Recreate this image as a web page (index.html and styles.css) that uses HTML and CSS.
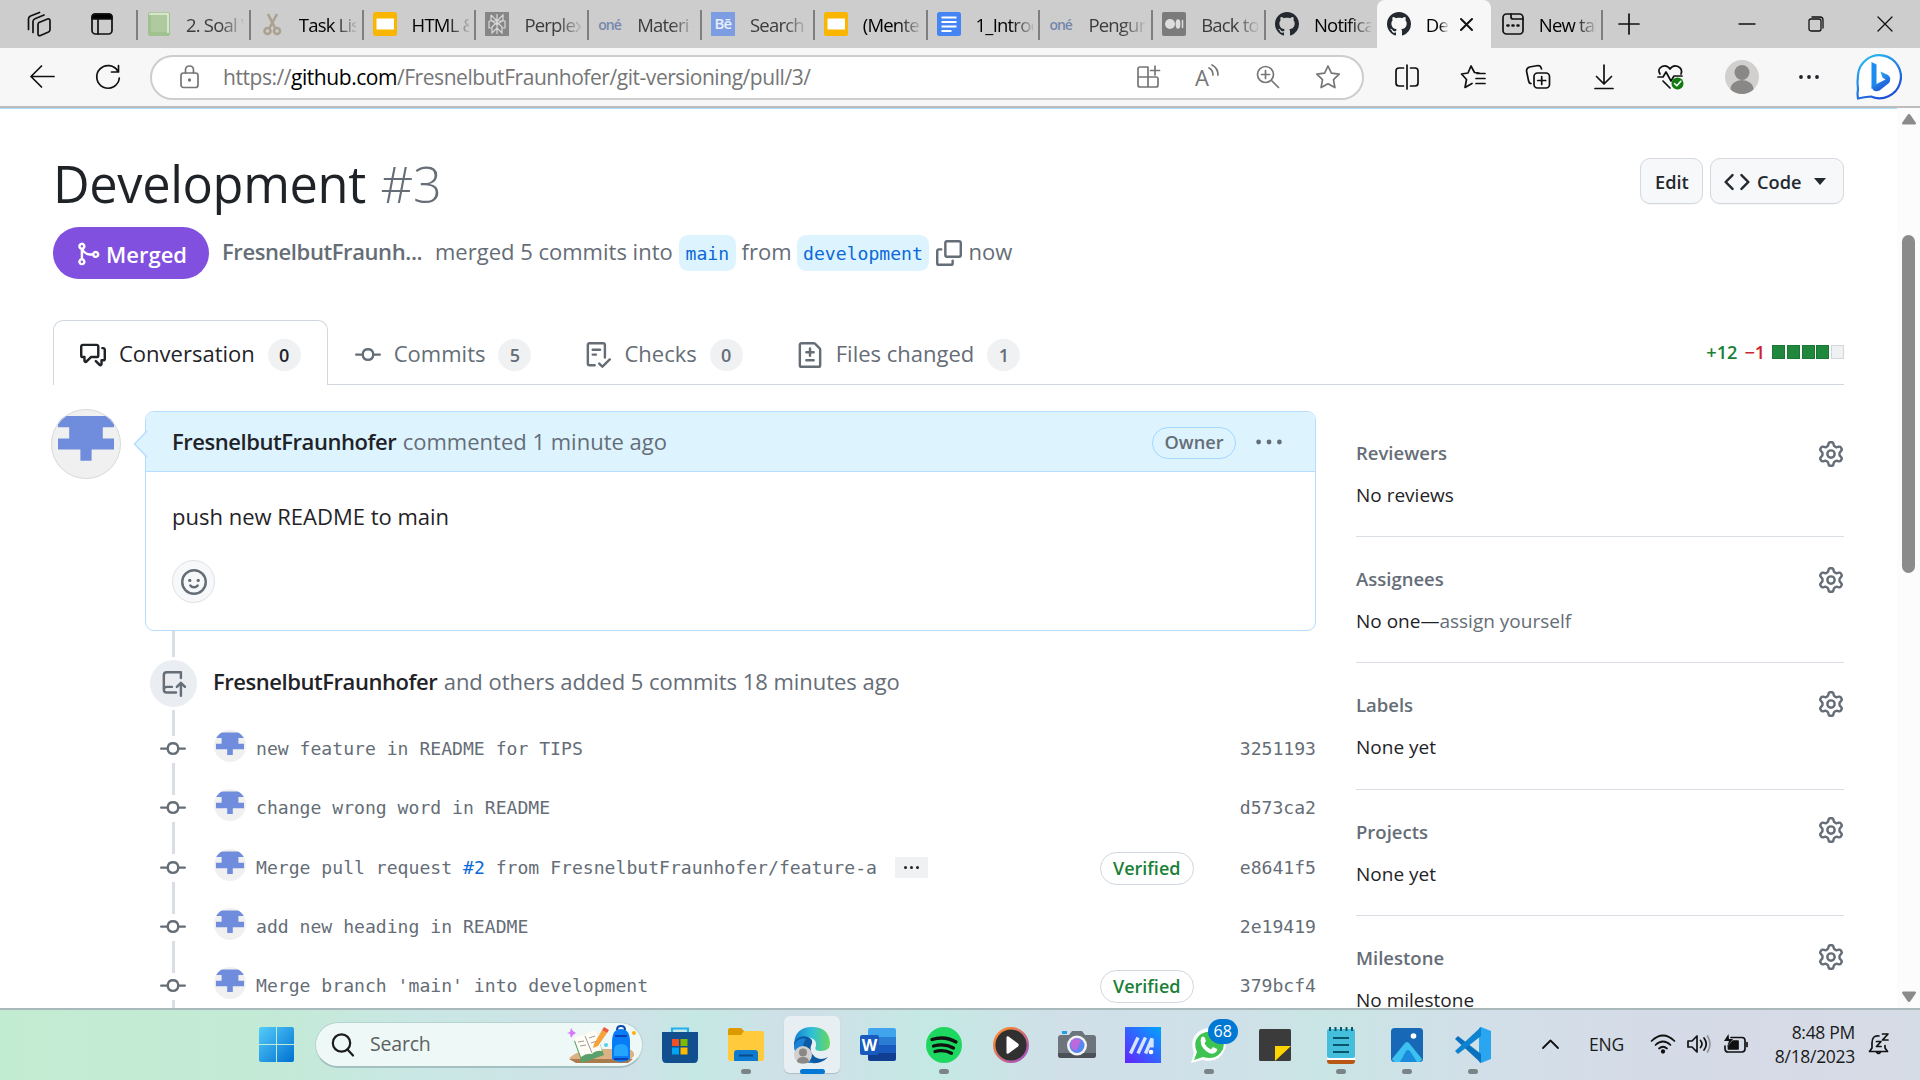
FILE: index.html
```html
<!DOCTYPE html>
<html lang="en">
<head>
<meta charset="utf-8">
<title>Development #3</title>
<link rel="stylesheet" href="styles.css">
</head>
<body>
<svg class="defs" width="0" height="0">
  <symbol id="merge" viewBox="0 0 16 16"><path fill-rule="evenodd" d="M5.45 5.154A4.25 4.25 0 0 0 9.25 7.5h1.378a2.251 2.251 0 1 1 0 1.5H9.25A5.734 5.734 0 0 1 5 7.123v3.505a2.25 2.25 0 1 1-1.5 0V5.372a2.25 2.25 0 1 1 1.95-.218ZM4.25 13.5a.75.75 0 1 0 0-1.5.75.75 0 0 0 0 1.5Zm8.5-4.5a.75.75 0 1 0 0-1.5.75.75 0 0 0 0 1.5ZM5 3.25a.75.75 0 1 0 0 .005V3.25Z"/></symbol>
  <symbol id="discussion" viewBox="0 0 16 16"><path d="M1.75 1h8.5c.966 0 1.75.784 1.75 1.75v5.5A1.75 1.75 0 0 1 10.25 10H7.061l-2.574 2.573A1.458 1.458 0 0 1 2 11.543V10h-.25A1.75 1.75 0 0 1 0 8.25v-5.5C0 1.784.784 1 1.75 1ZM1.5 2.75v5.5c0 .138.112.25.25.25h1a.75.75 0 0 1 .75.75v2.19l2.72-2.72a.749.749 0 0 1 .53-.22h3.5a.25.25 0 0 0 .25-.25v-5.5a.25.25 0 0 0-.25-.25h-8.5a.25.25 0 0 0-.25.25Zm13 2a.25.25 0 0 0-.25-.25h-.5a.75.75 0 0 1 0-1.5h.5c.966 0 1.75.784 1.75 1.75v5.5A1.75 1.75 0 0 1 14.25 12H14v1.543a1.458 1.458 0 0 1-2.487 1.03L9.22 12.28a.749.749 0 0 1 .326-1.275.749.749 0 0 1 .734.215l2.22 2.22v-2.19a.75.75 0 0 1 .75-.75h1a.25.25 0 0 0 .25-.25Z"/></symbol>
  <symbol id="commit" viewBox="0 0 16 16"><path d="M11.93 8.5a4.002 4.002 0 0 1-7.86 0H.75a.75.75 0 0 1 0-1.5h3.32a4.002 4.002 0 0 1 7.86 0h3.32a.75.75 0 0 1 0 1.5Zm-1.43-.75a2.5 2.5 0 1 0-5 0 2.5 2.5 0 0 0 5 0Z"/></symbol>
  <symbol id="checklist" viewBox="0 0 16 16"><path d="M2.5 1.75v11.5c0 .138.112.25.25.25h3.17a.75.75 0 0 1 0 1.5H2.75A1.75 1.75 0 0 1 1 13.25V1.75C1 .784 1.784 0 2.75 0h8.5C12.216 0 13 .784 13 1.75v7.736a.75.75 0 0 1-1.5 0V1.75a.25.25 0 0 0-.25-.25h-8.5a.25.25 0 0 0-.25.25Zm13.274 9.537-4.557 4.45a.75.75 0 0 1-1.055-.008l-1.943-1.95a.75.75 0 0 1 1.062-1.058l1.419 1.425 4.026-3.932a.75.75 0 1 1 1.048 1.074ZM4.75 4h4.5a.75.75 0 0 1 0 1.5h-4.5a.75.75 0 0 1 0-1.5ZM4 7.75A.75.75 0 0 1 4.75 7h2a.75.75 0 0 1 0 1.5h-2A.75.75 0 0 1 4 7.75Z"/></symbol>
  <symbol id="filediff" viewBox="0 0 16 16"><path d="M1 1.75C1 .784 1.784 0 2.75 0h7.586c.464 0 .909.184 1.237.513l2.914 2.914c.329.328.513.773.513 1.237v9.586A1.75 1.75 0 0 1 13.25 16H2.75A1.75 1.75 0 0 1 1 14.25Zm1.75-.25a.25.25 0 0 0-.25.25v12.5c0 .138.112.25.25.25h10.5a.25.25 0 0 0 .25-.25V4.664a.25.25 0 0 0-.073-.177l-2.914-2.914a.25.25 0 0 0-.177-.073ZM8 3.25a.75.75 0 0 1 .75.75v1.5h1.5a.75.75 0 0 1 0 1.5h-1.5v1.5a.75.75 0 0 1-1.5 0V7h-1.5a.75.75 0 0 1 0-1.5h1.5V4A.75.75 0 0 1 8 3.25Zm-3 8a.75.75 0 0 1 .75-.75h4.5a.75.75 0 0 1 0 1.5h-4.5a.75.75 0 0 1-.75-.75Z"/></symbol>
  <symbol id="copy" viewBox="0 0 16 16"><path d="M0 6.75C0 5.784.784 5 1.75 5h1.5a.75.75 0 0 1 0 1.5h-1.5a.25.25 0 0 0-.25.25v7.5c0 .138.112.25.25.25h7.5a.25.25 0 0 0 .25-.25v-1.5a.75.75 0 0 1 1.5 0v1.5A1.75 1.75 0 0 1 9.25 16h-7.5A1.75 1.75 0 0 1 0 14.25Z"/><path d="M5 1.75C5 .784 5.784 0 6.75 0h7.5C15.216 0 16 .784 16 1.75v7.5A1.75 1.75 0 0 1 14.25 11h-7.5A1.75 1.75 0 0 1 5 9.25Zm1.75-.25a.25.25 0 0 0-.25.25v7.5c0 .138.112.25.25.25h7.5a.25.25 0 0 0 .25-.25v-7.5a.25.25 0 0 0-.25-.25Z"/></symbol>
  <symbol id="code" viewBox="0 0 16 16"><path d="m11.28 3.22 4.25 4.25a.75.75 0 0 1 0 1.06l-4.25 4.25a.749.749 0 0 1-1.275-.326.749.749 0 0 1 .215-.734L13.94 8l-3.72-3.72a.749.749 0 0 1 .326-1.275.749.749 0 0 1 .734.215Zm-6.56 0a.751.751 0 0 1 1.042.018.751.751 0 0 1 .018 1.042L2.06 8l3.72 3.72a.749.749 0 0 1-.326 1.275.749.749 0 0 1-.734-.215L.47 8.53a.75.75 0 0 1 0-1.06Z"/></symbol>
  <symbol id="gear" viewBox="0 0 16 16"><path d="M8 0a8.2 8.2 0 0 1 .701.031C9.444.095 9.99.645 10.16 1.29l.288 1.107c.018.066.079.158.212.224.231.114.454.243.668.386.123.082.233.09.299.071l1.103-.303c.644-.176 1.392.021 1.82.63.27.385.506.792.704 1.218.315.675.111 1.422-.364 1.891l-.814.806c-.049.048-.098.147-.088.294.016.257.016.515 0 .772-.01.147.038.246.088.294l.814.806c.475.469.679 1.216.364 1.891a7.977 7.977 0 0 1-.704 1.217c-.428.61-1.176.807-1.82.63l-1.102-.302c-.067-.019-.177-.011-.3.071a5.909 5.909 0 0 1-.668.386c-.133.066-.194.158-.211.224l-.29 1.106c-.168.646-.715 1.196-1.458 1.26a8.006 8.006 0 0 1-1.402 0c-.743-.064-1.289-.614-1.458-1.26l-.289-1.106c-.018-.066-.079-.158-.212-.224a5.738 5.738 0 0 1-.668-.386c-.123-.082-.233-.09-.299-.071l-1.103.303c-.644.176-1.392-.021-1.82-.63a8.12 8.12 0 0 1-.704-1.218c-.315-.675-.111-1.422.363-1.891l.815-.806c.05-.048.098-.147.088-.294a6.214 6.214 0 0 1 0-.772c.01-.147-.038-.246-.088-.294l-.815-.806C.635 6.045.431 5.298.746 4.623a7.92 7.92 0 0 1 .704-1.217c.428-.61 1.176-.807 1.82-.63l1.102.302c.067.019.177.011.3-.071.214-.143.437-.272.668-.386.133-.066.194-.158.211-.224l.29-1.106C6.009.645 6.556.095 7.299.03 7.53.01 7.764 0 8 0Zm-.571 1.525c-.036.003-.108.036-.137.146l-.289 1.105c-.147.561-.549.967-.998 1.189-.173.086-.34.183-.5.29-.417.278-.97.423-1.529.27l-1.103-.303c-.109-.03-.175.016-.195.045-.22.312-.412.644-.573.99-.014.031-.021.11.059.19l.815.806c.411.406.562.957.53 1.456a4.709 4.709 0 0 0 0 .582c.032.499-.119 1.05-.53 1.456l-.815.806c-.081.08-.073.159-.059.19.162.346.353.677.573.989.02.03.085.076.195.046l1.102-.303c.56-.153 1.113-.008 1.53.27.161.107.328.204.501.29.447.222.85.629.997 1.189l.289 1.105c.029.109.101.143.137.146a6.6 6.6 0 0 0 1.142 0c.036-.003.108-.036.137-.146l.289-1.105c.147-.561.549-.967.998-1.189.173-.086.34-.183.5-.29.417-.278.97-.423 1.529-.27l1.103.303c.109.029.175-.016.195-.045.22-.313.411-.644.573-.99.014-.031.021-.11-.059-.19l-.815-.806c-.411-.406-.562-.957-.53-1.456a4.709 4.709 0 0 0 0-.582c-.032-.499.119-1.05.53-1.456l.815-.806c.081-.08.073-.159.059-.19a6.464 6.464 0 0 0-.573-.989c-.02-.03-.085-.076-.195-.046l-1.102.303c-.56.153-1.113.008-1.53-.27a4.44 4.44 0 0 0-.501-.29c-.447-.222-.85-.629-.997-1.189l-.289-1.105c-.029-.11-.101-.143-.137-.146a6.6 6.6 0 0 0-1.142 0ZM11 8a3 3 0 1 1-6 0 3 3 0 0 1 6 0ZM9.5 8a1.5 1.5 0 1 0-3.001.001A1.5 1.5 0 0 0 9.5 8Z"/></symbol>
  <symbol id="push" viewBox="0 0 16 16"><path d="M1 2.5A2.5 2.5 0 0 1 3.5 0h8.75a.75.75 0 0 1 .75.75v3.5a.75.75 0 0 1-1.5 0V1.5h-8a1 1 0 0 0-1 1v6.708A2.493 2.493 0 0 1 3.5 9h3.25a.75.75 0 0 1 0 1.5H3.5a1 1 0 0 0 0 2h5.75a.75.75 0 0 1 0 1.5H3.5A2.5 2.5 0 0 1 1 11.5Zm13.23 7.79-1.23-1.224v6.184a.75.75 0 0 1-1.5 0V9.066L10.28 10.29a.75.75 0 0 1-1.06-1.061l2.505-2.504a.75.75 0 0 1 1.06 0L15.29 9.23a.751.751 0 0 1-.018 1.042.751.751 0 0 1-1.042.018Z"/></symbol>
  <symbol id="smiley" viewBox="0 0 16 16"><g fill="none" stroke="currentColor" stroke-width="1.5" stroke-linecap="round"><circle cx="8" cy="8" r="7.25"/><path d="M5.75 10.2c1.1 1.4 3.4 1.4 4.5 0"/></g><circle cx="5.4" cy="7" r="1"/><circle cx="10.6" cy="7" r="1"/></symbol>
  <symbol id="kebab" viewBox="0 0 26 26"><circle cx="2.6" cy="13" r="2.4"/><circle cx="13" cy="13" r="2.4"/><circle cx="23.4" cy="13" r="2.4"/></symbol>
  <symbol id="github" viewBox="0 0 16 16"><path d="M8 0C3.58 0 0 3.58 0 8c0 3.54 2.29 6.53 5.47 7.59.4.07.55-.17.55-.38 0-.19-.01-.82-.01-1.49-2.01.37-2.53-.49-2.69-.94-.09-.23-.48-.94-.82-1.13-.28-.15-.68-.52-.01-.53.63-.01 1.08.58 1.23.82.72 1.21 1.87.87 2.33.66.07-.52.28-.87.51-1.07-1.78-.2-3.64-.89-3.64-3.95 0-.87.31-1.59.82-2.15-.08-.2-.36-1.02.08-2.12 0 0 .67-.21 2.2.82.64-.18 1.32-.27 2-.27.68 0 1.36.09 2 .27 1.53-1.04 2.2-.82 2.2-.82.44 1.1.16 1.92.08 2.12.51.56.82 1.27.82 2.15 0 3.07-1.87 3.75-3.65 3.95.29.25.54.73.54 1.48 0 1.07-.01 1.93-.01 2.2 0 .21.15.46.55.38A8.013 8.013 0 0 0 16 8c0-4.42-3.58-8-8-8z"/></symbol>
  <clipPath id="round70"><circle cx="35" cy="35" r="35"/></clipPath>
  <clipPath id="round32"><circle cx="16" cy="16" r="16"/></clipPath>
  <symbol id="identicon" viewBox="0 0 70 70"><circle cx="35" cy="35" r="35" fill="#f0f0f0"/><path clip-path="url(#round70)" fill="#708cdc" d="M7 7h56v11.200H51.800v11.200H63v11.200H40.600v11.200H29.400V40.600H7V29.400h11.200V18.200H7z"/><circle cx="35" cy="35" r="34.500" fill="none" stroke="#d9dbde"/></symbol>
  <symbol id="identicon-s" viewBox="0 0 32 32"><circle cx="16" cy="16" r="16" fill="#f0f0f0"/><path clip-path="url(#round32)" fill="#708cdc" d="M2 2.500h28v5.600h-5.600v5.600H30v5.600H18.800v5.600h-5.600v-5.600H2v-5.600h5.600V8.100H2z"/></symbol>
  <symbol id="slides" viewBox="0 0 24 24"><rect width="24" height="24" rx="2.500" fill="#f9b500"/><rect x="3.500" y="6.500" width="17.500" height="11" fill="#fff"/></symbol>
</svg>

<div class="tabstrip">
  <div class="strip-tools">
    <svg width="26" height="26" viewBox="0 0 26 26" class="line"><path d="M13 11.500l8.500-3.500q2.500-.7 2.500 1.800v8.700q0 1.800-1.500 2.500l-8 3.500q-2.500.8-2.500-1.700v-9q0-1.700 1-2.300z"/><path d="M7 21.500V10.500q0-2 2-2.800L18 4M2.500 18.500V8q0-2 2-3L13.500 1.500"/></svg>
    <svg width="22" height="22" viewBox="0 0 22 22" class="line"><rect x="1" y="1" width="20" height="20" rx="3.500"/><path d="M1 6V4q0-3 3-3h14q3 0 3 3v2z" fill="#000"/><path d="M7 6v15"/></svg>
  </div>
  <div class="tab asleep"><svg width="24" height="24" viewBox="0 0 24 24"><rect x="1" width="22" height="24" rx="2" fill="#9fc28f"/><path d="M4 0h18v20H4z" fill="#b0ca9f"/><path d="M2 2h19v19" fill="none" stroke="#e3eedd" stroke-width="1.500"/></svg><span>2. Soal W</span></div>
  <div class="tab"><svg width="24" height="24" viewBox="0 0 24 24" fill="none" stroke="#aaa191" stroke-width="2.600"><path d="M8 2l7 14M17 2L9.500 16"/><circle cx="7.500" cy="19" r="3"/><circle cx="17" cy="19" r="3"/></svg><span>Task List</span></div>
  <div class="tab"><svg width="24" height="24"><use href="#slides"/></svg><span>HTML &amp;</span></div>
  <div class="tab asleep"><svg width="24" height="24" viewBox="0 0 24 24"><rect width="24" height="24" fill="#868686"/><path d="M12 2v20M6 3v5l6 5 6-5V3l-6 6-6-6M4 9h16v7h-3M4 9v7h3M7 21v-6l5-5 5 5v6l-5-5z" fill="none" stroke="#d8d8d8" stroke-width="1.200"/></svg><span>Perplexi</span></div>
  <div class="tab asleep"><b class="one-logo">oné</b><span>Materi -</span></div>
  <div class="tab asleep"><b class="be-logo">Bē</b><span>Search</span></div>
  <div class="tab"><svg width="24" height="24"><use href="#slides"/></svg><span>(Mente</span></div>
  <div class="tab"><svg width="24" height="24" viewBox="0 0 24 24"><rect width="24" height="24" rx="2.500" fill="#4484f5"/><path d="M4.500 5.500h15M4.500 10h15M4.500 14.500h15M4.500 19h10" stroke="#fff" stroke-width="2"/></svg><span>1_Introd</span></div>
  <div class="tab asleep"><b class="one-logo">oné</b><span>Pengun</span></div>
  <div class="tab asleep"><svg width="24" height="24" viewBox="0 0 24 24"><rect width="24" height="24" rx="2" fill="#7b7b7b"/><circle cx="8" cy="12" r="5" fill="#ddd"/><ellipse cx="16" cy="12" rx="2.400" ry="4.700" fill="#ddd"/><path d="M20.500 8v8" stroke="#ddd" stroke-width="1.500"/></svg><span>Back to</span></div>
  <div class="tab"><svg width="24" height="24" fill="#24292f"><use href="#github"/></svg><span>Notifica</span></div>
  <div class="tab active"><svg width="24" height="24" fill="#24292f"><use href="#github"/></svg><span>De</span><svg class="line" width="13" height="13" viewBox="0 0 13 13"><path d="M1 1l11 11M12 1L1 12" stroke-width="2"/></svg></div>
  <div class="tab last"><svg width="22" height="22" viewBox="0 0 22 22" class="line"><rect x="1" y="1" width="20" height="20" rx="3.500"/><path d="M9 1v3q0 2 2 2h10"/><path d="M5.500 12.500h1M10.500 12.500h1M15.500 12.500h1" stroke-width="2.600"/></svg><span>New tab</span></div>
  <svg class="line newtab" width="22" height="22" viewBox="0 0 22 22"><path d="M11 1v20M1 11h20"/></svg>
  <div class="winctl">
    <svg class="line" width="16" height="16" viewBox="0 0 16 16"><path d="M0 8h16" stroke-width="1.300"/></svg>
    <svg class="line" width="16" height="16" viewBox="0 0 16 16"><rect x="1" y="3" width="12" height="12" rx="2" stroke-width="1.300"/><path d="M4 1h8q3 0 3 3v8" stroke-width="1.300"/></svg>
    <svg class="line" width="16" height="16" viewBox="0 0 16 16"><path d="M1 1l14 14M15 1L1 15" stroke-width="1.300"/></svg>
  </div>
</div>

<div class="toolbar">
  <svg class="line" width="26" height="26" viewBox="0 0 26 26"><path d="M25 12.500H2M12.500 2L2 12.500 12.500 23"/></svg>
  <svg class="line reload" width="26" height="26" viewBox="0 0 26 26"><path d="M23 7.500A11.300 11.300 0 1 0 24.300 14M23.500 1.500v6.500h-7"/></svg>
  <div class="address">
    <svg class="line grey" width="20" height="26" viewBox="0 0 20 26"><rect x="1" y="9" width="17" height="14.500" rx="2.500"/><path d="M5.500 9V6q0-4 4-4t4 4v3"/><circle cx="9.500" cy="16" r=".8"/></svg>
    <div class="url">https://<b>github.com</b>/FresnelbutFraunhofer/git-versioning/pull/3/</div>
    <div class="address-icons">
      <svg class="line grey" width="24" height="24" viewBox="0 0 24 24"><path d="M2 4q0-2 2-2h8v20H4q-2 0-2-2zM2 12h18q2 0 2 2v6q0 2-2 2h-8M19 1v9M14.500 5.500h9"/></svg>
      <div class="read"><span>A</span><svg class="line grey" width="12" height="14" viewBox="0 0 12 14"><path d="M0 4q4 2 4 7M3 1q6 3 6 10"/></svg></div>
      <svg class="line grey" width="24" height="24" viewBox="0 0 24 24"><circle cx="9.500" cy="9.500" r="8"/><path d="M15.500 15.500l7 7M9.500 5.500v8M5.500 9.500h8"/></svg>
      <svg class="line grey" width="26" height="26" viewBox="0 0 26 26"><path d="M13 2l3.400 7.200 7.800 1-5.700 5.500 1.400 7.900L13 19.800l-6.900 3.800 1.400-7.900L1.800 10.200l7.800-1z"/></svg>
    </div>
  </div>
  <div class="tools">
    <svg class="line" width="26" height="26" viewBox="0 0 26 26"><path d="M13 1v24M9.500 4H5Q2 4 2 7v12q0 3 3 3h4.500M16.500 4H21q3 0 3 3v12q0 3-3 3h-4.500"/></svg>
    <svg class="line" width="26" height="26" viewBox="0 0 26 26"><path d="M19 9l-4.500-.5L11 2 8 9l-6.500 1 5 5.500L5 23.500l7-4M16 14.500h9M17 9.500h8M16 19.500h9"/></svg>
    <svg class="line" width="26" height="26" viewBox="0 0 26 26"><rect x="9" y="9" width="15.500" height="15" rx="3.500"/><path d="M16.700 12.500v8M12.700 16.500h8M6 19.500q-2 0-2.500-3L1.500 7q0-3 3-4L13 1.500q3 0 3.500 3.500"/></svg>
    <svg class="line" width="26" height="26" viewBox="0 0 26 26"><path d="M13 1v18M5.500 12.500L13 20l7.500-7.500M4 24.500h18"/></svg>
    <svg class="line" width="28" height="26" viewBox="0 0 28 26"><path d="M3 10Q0 5 5 2.500q5-2 8 2.500 3-4.500 8-2.500 5 2.500 3 7.500M1 13h5l3-5 5 9 3-5h8M6 17l7 7"/><circle cx="20.500" cy="19.500" r="6" fill="#107c10" stroke="none"/><path d="M17.500 19.500l2.300 2.300 4-4.500" stroke="#fff" stroke-width="1.600"/></svg>
    <svg width="34" height="34" viewBox="0 0 34 34"><circle cx="17" cy="17" r="17" fill="#d2d0ce"/><circle cx="17" cy="12.500" r="7.500" fill="#8a8886"/><path d="M5.500 29.500a11.500 9.500 0 0 1 23 0A17 17 0 0 1 5.500 29.500z" fill="#8a8886"/></svg>
    <svg width="22" height="22" viewBox="0 0 22 22"><circle cx="3" cy="11" r="1.900"/><circle cx="11" cy="11" r="1.900"/><circle cx="19" cy="11" r="1.900"/></svg>
    <svg class="bing" width="46" height="46" viewBox="0 0 46 46"><defs><linearGradient id="bg1" x1="0" y1="0" x2=".6" y2="1"><stop offset="0" stop-color="#2bc4f3"/><stop offset="1" stop-color="#1d4fd8"/></linearGradient></defs><path d="M2 44.500Q1 40 2 35 1 29 2 21A21.500 21.500 0 1 1 15 42.500Q8 43 2 44.500z" fill="#fff" stroke="url(#bg1)" stroke-width="2.200"/><path d="M15.500 8l5 2.500v19.500l-5 5z" fill="#1b8df0"/><path d="M24.500 17.500l7.500 3.500q4 3 1 8L23.500 36.500q-6 2.500-8-3.500l5-3 9-4.500-3-2z" fill="url(#bg1)"/></svg>
  </div>
</div>

<div class="viewport">
<main class="page">
  <header class="title-row">
    <h1>Development <span>#3</span></h1>
    <div class="actions">
      <button class="btn edit">Edit</button>
      <button class="btn"><svg width="26" height="26"><use href="#code"/></svg><span>Code</span><i class="caret"></i></button>
    </div>
  </header>
  <div class="meta">
    <span class="state"><svg width="26" height="26"><use href="#merge"/></svg><span>Merged</span></span>
    <b class="author">FresnelbutFraunh...</b>
    <span class="t-merged">merged 5 commits into</span>
    <code class="branch">main</code>
    <span class="t-from">from</span>
    <code class="branch">development</code>
    <svg class="copy" width="26" height="26"><use href="#copy"/></svg>
    <span class="t-now">now</span>
  </div>
  <nav class="tabs">
    <a class="on"><svg width="26" height="26"><use href="#discussion"/></svg><span>Conversation</span><em>0</em></a>
    <a><svg width="26" height="26"><use href="#commit"/></svg><span>Commits</span><em>5</em></a>
    <a><svg width="26" height="26"><use href="#checklist"/></svg><span>Checks</span><em>0</em></a>
    <a><svg width="26" height="26"><use href="#filediff"/></svg><span>Files changed</span><em>1</em></a>
    <div class="diffstat"><b class="add">+12</b><b class="del">−1</b><div class="blocks"><i></i><i></i><i></i><i></i><i class="neutral"></i></div></div>
  </nav>

  <div class="columns">
    <svg class="avatar" width="70" height="70"><use href="#identicon"/></svg>
    <section class="timeline">
      <article class="comment">
        <svg class="pointer" width="14" height="28" viewBox="0 0 14 28"><path d="M14 1L1.500 14 14 27" fill="#ddf4ff" stroke="#b6dcff" stroke-width="1.500"/></svg>
        <div class="comment-head"><b>FresnelbutFraunhofer</b><span>commented 1 minute ago</span><em class="owner">Owner</em><svg width="26" height="26"><use href="#kebab"/></svg></div>
        <div class="comment-body"><p>push new README to main</p><div class="react"><svg width="26" height="26"><use href="#smiley"/></svg></div></div>
      </article>
      <div class="event">
        <div class="rail"><i></i><div class="event-icon"><svg width="26" height="26"><use href="#push"/></svg></div><i></i></div>
        <p><b>FresnelbutFraunhofer</b><span>and others added 5 commits 18 minutes ago</span></p>
      </div>
      <div class="commit"><div class="dot"><svg width="26" height="26"><use href="#commit"/></svg><i></i></div><svg class="face" width="32" height="32"><use href="#identicon-s"/></svg><code>new feature in README for TIPS</code><code class="sha">3251193</code></div>
      <div class="commit"><div class="dot"><svg width="26" height="26"><use href="#commit"/></svg><i></i></div><svg class="face" width="32" height="32"><use href="#identicon-s"/></svg><code>change wrong word in README</code><code class="sha">d573ca2</code></div>
      <div class="commit"><div class="dot"><svg width="26" height="26"><use href="#commit"/></svg><i></i></div><svg class="face" width="32" height="32"><use href="#identicon-s"/></svg><code>Merge pull request <a>#2</a> from FresnelbutFraunhofer/feature-a</code><span class="more"><i></i><i></i><i></i></span><em class="verified">Verified</em><code class="sha">e8641f5</code></div>
      <div class="commit"><div class="dot"><svg width="26" height="26"><use href="#commit"/></svg><i></i></div><svg class="face" width="32" height="32"><use href="#identicon-s"/></svg><code>add new heading in README</code><code class="sha">2e19419</code></div>
      <div class="commit"><div class="dot"><svg width="26" height="26"><use href="#commit"/></svg><i></i></div><svg class="face" width="32" height="32"><use href="#identicon-s"/></svg><code>Merge branch 'main' into development</code><em class="verified">Verified</em><code class="sha">379bcf4</code></div>
    </section>
    <aside class="sidebar">
      <section><h2>Reviewers<svg width="26" height="26"><use href="#gear"/></svg></h2><p>No reviews</p></section>
      <section><h2>Assignees<svg width="26" height="26"><use href="#gear"/></svg></h2><p>No one—<a>assign yourself</a></p></section>
      <section class="menu"><h2>Labels<svg width="26" height="26"><use href="#gear"/></svg></h2><p>None yet</p></section>
      <section class="menu"><h2>Projects<svg width="26" height="26"><use href="#gear"/></svg></h2><p>None yet</p></section>
      <section class="menu"><h2>Milestone<svg width="26" height="26"><use href="#gear"/></svg></h2><p>No milestone</p></section>
    </aside>
  </div>
</main>
<div class="scrollbar">
  <svg width="14" height="11" viewBox="0 0 14 11"><path d="M7 0q1 0 1.500 1L14 9q0 1.500-1 1.500H1Q0 10.500 0 9l5.500-8Q6 0 7 0z"/></svg>
  <div class="thumb"></div>
  <svg width="14" height="11" viewBox="0 0 14 11"><path d="M7 11q-1 0-1.500-1L0 2Q0 .5 1 .5h12q1 0 1 1.500l-5.500 8Q8 11 7 11z"/></svg>
</div>
</div>

<footer class="taskbar">
  <svg class="start" width="35" height="35" viewBox="0 0 35 35"><defs><linearGradient id="win" x1="0" y1="0" x2="1" y2="1"><stop offset="0" stop-color="#54cdfb"/><stop offset="1" stop-color="#0070d0"/></linearGradient></defs><path fill="url(#win)" d="M2 0h15v17H0V2q0-2 2-2zM18 0h15q2 0 2 2v15H18zM0 18h17v17H2q-2 0-2-2zM18 18h17v15q0 2-2 2H18z"/></svg>
  <div class="search">
    <svg width="24" height="24" viewBox="0 0 24 24" fill="none" stroke="#1c1c1c" stroke-width="2.200" stroke-linecap="round"><circle cx="10.500" cy="10" r="8.700"/><path d="M16.500 16.500l5.500 6"/></svg>
    <span>Search</span>
    <svg width="70" height="40" viewBox="0 0 70 40"><path d="M2 33Q10 25 30 24h32q6 2 5 7l-6 6H10z" fill="#dcb183"/><path d="M2 34h64l-5 4H9z" fill="#a97c50"/><path d="M7 16l22-8 8 22-22 8z" fill="#5aa06b"/><path d="M7 13q6-4 11-2 4-6 11-5l6 20q-6-1-10 3-6-1-11 3z" fill="#fffdf5"/><path d="M18 11l7 17M11 17l6-1M13 21l6-1M22 13l6-2M24 18l6-2" stroke="#9a9a9a"/><path d="M27 19l8-14 5 3-9 13-5 2z" fill="#f7a13b"/><path d="M35 5l2-3 5 3-2 3z" fill="#ee5a3a"/><path d="M45 17q0-13 9-13t9 13v17q-4 3-9 3t-9-3z" fill="#087bf7"/><path d="M50 5q0-4 4-4t4 4" fill="none" stroke="#0b48a8" stroke-width="2"/><path d="M47 25q0-6 7-6t7 6v6H47z" fill="#23a5ff"/><path d="M48 11h12M47 34h14" stroke="#0a42b4" stroke-width="2"/><path d="M4 3l2 3 3 2-3 2-2 3-1-4-3-1 3-1z" fill="#d678f8"/><circle cx="39" cy="20" r="2" fill="#51d1f0"/><circle cx="67" cy="8" r="2" fill="#ffae16"/></svg>
  </div>
  <div class="apps">
    <div class="app"><svg width="36" height="36" viewBox="0 0 36 36"><path d="M10 6V1.500h16V6" fill="none" stroke="#22b1ee" stroke-width="2.200"/><path d="M0 5h36v26q0 5-4 5H4q-4 0-4-5z" fill="#114f8e"/><path fill="#f25022" d="M10 12h7v7h-7z"/><path fill="#7fba00" d="M18.500 12h7v7h-7z"/><path fill="#00a4ef" d="M10 20.500h7v7h-7z"/><path fill="#ffb900" d="M18.500 20.500h7v7h-7z"/></svg></div>
    <div class="app run"><svg width="36" height="36" viewBox="0 0 36 36"><path d="M0 3q0-2 2-2h11l4 4-3 5H0z" fill="#dc9a00"/><path d="M0 8h13l3-4h18q2 0 2 2v26q0 2-2 2H2q-2 0-2-2z" fill="#ffcb3d"/><path d="M6 34V26q0-3 3-3h18q3 0 3 3v8z" fill="#0f7bd0"/><path d="M11 28.500h14" stroke="#0a4a8a" stroke-width="2"/></svg></div>
    <div class="app current"><svg width="38" height="38" viewBox="0 0 38 38"><defs><linearGradient id="e1" x1="0" x2="1"><stop offset="0" stop-color="#1580d2"/><stop offset=".5" stop-color="#2fc0d8"/><stop offset="1" stop-color="#68d85a"/></linearGradient></defs><path d="M1 18Q2 1 19 1t18 16q0 8-9 8-8 0-5-5 1-6-5-8-10-3-17 6z" fill="url(#e1)"/><path d="M1 17q5-9 14-6 5 2 4 6-4 8 3 14 6 4 13 0-6 7-16 6Q1 35 1 17z" fill="#0c59a4"/><path d="M1 19q4-8 12-6-5 6-2 14 3 8 10 10Q2 38 1 19z" fill="#1a83d6"/><circle cx="10" cy="29" r="9" fill="#d2d0ce"/><circle cx="10" cy="26.500" r="4" fill="#8a8886"/><path d="M4 36q0-5 6-5t6 5q-6 3-12 0z" fill="#8a8886"/></svg></div>
    <div class="app"><svg width="36" height="36" viewBox="0 0 36 36"><path fill="#41a5ee" d="M10 1h24q2 0 2 2v7H8V3q0-2 2-2z"/><path fill="#2b7cd3" d="M8 10h28v8H8z"/><path fill="#185abd" d="M8 18h28v8H8z"/><path fill="#103f91" d="M8 26h28v6q0 2-2 2H10q-2 0-2-2z"/><rect y="8" width="19" height="20" rx="2" fill="#185abd"/><text x="9.500" y="23.500" text-anchor="middle" class="word">W</text></svg></div>
    <div class="app run"><svg width="36" height="36" viewBox="0 0 36 36"><circle cx="18" cy="18" r="18" fill="#1ed760"/><path d="M6 12.500q13-4 24 2.500M7.500 19q11-3 20 2M9 24.500q9-2.500 16.500 1.800" fill="none" stroke="#111" stroke-width="3.300" stroke-linecap="round"/></svg></div>
    <div class="app"><svg width="36" height="36" viewBox="0 0 36 36"><defs><linearGradient id="mp" x1="0" y1="0" x2="1" y2="1"><stop offset=".2" stop-color="#f5843c"/><stop offset="1" stop-color="#9a4bd0"/></linearGradient></defs><circle cx="18" cy="18" r="16.800" fill="#303030" stroke="url(#mp)" stroke-width="2.400"/><path d="M13.500 10.500q0-2 2-1l9.500 7q1.500 1.500 0 3l-9.500 7q-2 1-2-1z" fill="#fff"/></svg></div>
    <div class="app"><svg width="38" height="34" viewBox="0 0 38 34"><path d="M3 7h8l3-4h10l3 4h8q3 0 3 3v17q0 3-3 3H3q-3 0-3-3V10q0-3 3-3z" fill="#6d747b"/><path d="M0 25h38v2q0 3-3 3H3q-3 0-3-3z" fill="#4b5157"/><path d="M4 4.500h5" stroke="#21a0e8" stroke-width="3"/><circle cx="19" cy="17.500" r="10" fill="#f3f3f3"/><circle cx="19" cy="17.500" r="7.500" fill="#5a86f1"/><path d="M14 12q5-4 9 1l-5 10q-8-3-4-11z" fill="#bd69de"/></svg></div>
    <div class="app"><svg width="36" height="36" viewBox="0 0 36 36"><defs><linearGradient id="ma" x1="0" y1="1" x2="1" y2="0"><stop offset="0" stop-color="#6522ff"/><stop offset="1" stop-color="#00a5ff"/></linearGradient></defs><rect width="36" height="36" fill="url(#ma)"/><path d="M5.500 26.500L13 10.500M13 26.500l7.500-16M20.500 26.500l6.500-15v9" fill="none" stroke="#d5e4ff" stroke-width="3.400"/><circle cx="26" cy="25" r="2.300" fill="#fff"/></svg></div>
    <div class="app run"><svg width="38" height="38" viewBox="0 0 38 38"><path d="M1 37l3-10Q-1 13 9 5.500 19-1 29 5q9 7 6 18-6 15-23 11z" fill="#fff"/><path d="M4 34l3-8Q2 15 11 8q9-5 17 0 8 7 5 15-6 12-20 8z" fill="#3fc351"/><path d="M11 12q2-3 4 0l1 3-1.500 2.500q2 4 6.500 6L23 21l4 2q1 1-1 3-4 4-10-1-7-6-5-13z" fill="#fff"/></svg><span class="badge">68</span></div>
    <div class="app"><svg width="32" height="34" viewBox="0 0 32 34"><rect y="1" width="32" height="32" rx="1.500" fill="#3b3b3b"/><path d="M16 33V18h16z" fill="#ffd400"/></svg></div>
    <div class="app run"><svg width="30" height="38" viewBox="0 0 30 38"><path d="M1 32h28v3q0 3-3 3H4q-3 0-3-3z" fill="#b85815"/><path d="M1 31h28v3H1z" fill="#fff"/><rect x="1" y="3" width="28" height="29" rx="2" fill="#45bedb"/><path d="M4 1v4M9.500 1v4M15 1v4M20.500 1v4M26 1v4" stroke="#0c5767" stroke-width="2"/><path d="M7 12h16M7 19h16M7 26h16" stroke="#08566b" stroke-width="2"/></svg></div>
    <div class="app run"><svg width="32" height="34" viewBox="0 0 32 34"><rect width="32" height="34" rx="3.500" fill="#1769b8"/><path d="M1 31l13-16q2-2 4 0l13 16q-1 3-4 3H5q-3 0-4-3z" fill="#3cc1f0"/><path d="M9 34l6-11q2-2 4 0l7 11z" fill="#1b8bdc"/><circle cx="22.500" cy="8" r="2.800" fill="#fff"/></svg></div>
    <div class="app run"><svg width="36" height="36" viewBox="0 0 36 36"><path d="M26 0l10 4v28l-10 4-2-1V1z" fill="#2aa5f0"/><path d="M0 12l3-3 23 18v9z" fill="#0a71bd"/><path d="M0 24l3 3L26 9V0z" fill="#0d83d2"/></svg></div>
  </div>
  <div class="tray">
    <svg class="line" width="17" height="10" viewBox="0 0 17 10"><path d="M1 9l7.500-7.500L16 9" stroke-width="1.800"/></svg>
    <span class="lang">ENG</span>
    <svg class="line" width="26" height="22" viewBox="0 0 26 22"><path d="M1.500 8q11.500-11 23 0M5.500 12q7.500-7 15 0M9 15.500q4-3.500 8 0"/><circle cx="13" cy="18.500" r="1.300" fill="#111"/></svg>
    <svg class="line" width="24" height="20" viewBox="0 0 24 20"><path d="M1 7h4l5-5v16l-5-5H1zM13.500 6.500q3 3.500 0 7M17 4q4.500 6 0 12"/><path d="M20.500 2q5 8 0 16" opacity=".35"/></svg>
    <svg class="line" width="26" height="22" viewBox="0 0 26 22"><path d="M9 4.500h11q3 0 3 3v8q0 3.500-3 3.500H6q-3 0-3-3.500V13M25 9.500v4"/><path d="M6.500 16v-2.500L11 8h5v8z" fill="#111"/><path d="M6.500 1L2 8h5l-2 6 6-8H7z" fill="#111" stroke="none"/></svg>
    <div class="clock"><span>8:48 PM</span><span>8/18/2023</span></div>
    <svg class="line" width="24" height="24" viewBox="0 0 24 24"><path d="M12 4Q5 3 5 11v5l-2.500 3.500h18L18 16v-2.500M9.500 20q2 3 4 0M15.500 2h5.500l-5.500 6H21M9.500 9.500h4.500l-4.500 5H14" stroke-width="1.700"/></svg>
  </div>
</footer>
</body>
</html>
```
FILE: styles.css
```css
* { box-sizing: border-box; }
body { margin: 0; width: 1920px; height: 1080px; overflow: hidden; display: flex; flex-direction: column; background: #fff; font-family: "Open Sans", "Noto Sans", sans-serif; color: #1f2328; }
svg { display: block; flex: none; overflow: visible; }
svg:not([fill]) { fill: currentColor; }
p, h1, h2 { margin: 0; font-weight: 400; }
em, i { font-style: normal; }
b { font-weight: 600; }
.defs { position: absolute; }
svg.line { fill: none; stroke: #111; stroke-width: 1.7; stroke-linecap: round; stroke-linejoin: round; }
svg.grey { stroke: #767676; }

/* Browser tabs */
.tabstrip { height: 48px; flex: none; display: flex; background: #cdcdcd; color: #000; }
.strip-tools { width: 136px; padding-left: 26px; display: flex; align-items: center; gap: 39px; }
.tab { width: 112.8px; height: 48px; flex: none; display: flex; align-items: center; padding-left: 11px; font-size: 18.5px; letter-spacing: -0.8px; background: linear-gradient(#7f7f7f, #7f7f7f) 0 10px / 2px 30px no-repeat; }
.tab span { width: 57px; margin-left: 15px; overflow: hidden; white-space: nowrap; -webkit-mask-image: linear-gradient(90deg, #000 60%, rgba(0,0,0,.1)); mask-image: linear-gradient(90deg, #000 60%, rgba(0,0,0,.1)); }
.asleep { color: #3c3c3c; }
.tab.active { width: 114px; background: #f7f7f7; border-radius: 8px 8px 0 0; padding-left: 10px; }
.tab.active span { width: 22px; margin-right: 12px; }
.tab.last { background: linear-gradient(#7f7f7f, #7f7f7f) 100% 10px / 2px 30px no-repeat; width: 112px; padding-left: 11px; }
.newtab { margin: 13px 0 0 15px; }
.one-logo { width: 24px; font-size: 14px; letter-spacing: -1px; color: #7588ac; }
.be-logo { width: 24px; height: 24px; background: #7d9de2; color: #e8eefb; font-size: 15px; line-height: 23px; text-align: center; }
.winctl { margin-left: auto; padding-right: 27px; display: flex; align-items: center; gap: 53px; }

/* Address row */
.toolbar { height: 60px; flex: none; display: flex; align-items: center; background: #f7f7f7; border-bottom: 2px solid #bdbdbd; padding-left: 29px; }
.reload { margin-left: 40px; }
.address { width: 1214px; height: 45px; margin-left: 29px; border: 2px solid #cdcdcd; border-radius: 23px; background: #fff; display: flex; align-items: center; padding: 0 21px 0 28px; }
.url { margin-left: 23px; font-size: 21px; letter-spacing: -0.45px; color: #767676; white-space: nowrap; }
.url b { font-weight: 400; color: #000; }
.address-icons { margin-left: auto; display: flex; align-items: center; gap: 35px; }
.read { display: flex; width: 26px; color: #767676; font-size: 22px; line-height: 26px; }
.tools { flex: 1; display: flex; align-items: center; justify-content: space-between; padding: 0 18px 0 30px; }
.bing { margin-left: -4px; }

/* Page */
.viewport { height: 900px; flex: none; display: flex; overflow: hidden; }
.page { width: 1897px; border-top: 1px solid #a8dcff; padding: 43px 53px 0; font-size: 22px; }
.title-row { height: 64px; display: flex; justify-content: space-between; }
h1 { font-size: 50.5px; line-height: 64px; letter-spacing: -0.35px; white-space: nowrap; }
h1 span { color: #656d76; font-weight: 300; margin-left: 2px; }
.actions { display: flex; gap: 7px; padding-top: 6px; }
.btn { width: 134px; height: 46px; display: flex; align-items: center; padding: 1px 0 0 13px; border: 1px solid #d5d8dc; border-radius: 10px; background: #f6f8fa; font: 600 18.2px "Open Sans", sans-serif; color: #24292f; box-shadow: 0 1px 0 rgba(31,35,40,.04); }
.edit { width: 63px; padding-left: 14px; }
.btn svg { margin-right: 7px; }
.caret { margin-left: 13px; border: 6.5px solid transparent; border-top: 7px solid #24292f; border-bottom: 0; }
.meta { display: flex; align-items: center; height: 52px; margin-top: 11px; color: #656d76; white-space: nowrap; }
.state { width: 156px; height: 52px; border-radius: 26px; background: #8250df; color: #fff; font-weight: 600; display: flex; align-items: center; padding: 2px 0 0 22px; gap: 5px; }
.author { width: 213px; margin-left: 13px; padding-bottom: 4px; letter-spacing: -0.4px; }
.t-merged { width: 244px; padding-bottom: 4px; }
.branch { height: 36px; padding: 0 6.500px; border-radius: 9px; background: #ddf4ff; color: #0969da; line-height: 37px; }
.t-from { width: 61px; padding: 0 0 4px 6px; }
.copy { margin: 0 6px 0 7px; }
.t-now { padding-bottom: 4px; }
code { font-family: "DejaVu Sans Mono", monospace; font-size: 18.1px; }

.tabs { height: 65px; margin-top: 41px; display: flex; border-bottom: 1px solid #d0d7de; color: #656d76; }
.tabs a { height: 65px; display: flex; align-items: center; padding: 5px 27px 0; }
.tabs a span { margin: 0 13px; padding-bottom: 4px; white-space: nowrap; }
.tabs .on { background: #fff; color: #1f2328; border: 1px solid #d0d7de; border-bottom: 0; border-radius: 10px 10px 0 0; padding: 4px 26px 0 26px; }
.tabs em { min-width: 33px; height: 32px; border-radius: 16px; background: #eff1f3; font-size: 18px; font-weight: 600; line-height: 32px; text-align: center; }
.diffstat { margin-left: auto; display: flex; align-items: center; font-size: 18.2px; gap: 7px; }
.add { color: #1a7f37; }
.del { color: #cf222e; }
.blocks { display: flex; gap: 1.700px; }
.blocks i { width: 13px; height: 14px; background: #1f883d; border: 1px solid #1b7735; }
.blocks .neutral { background: #eff1f3; border-color: #d3d7dc; }

.columns { display: flex; margin-left: -2px; }
.avatar { margin-top: 24px; }
.timeline { width: 1171px; margin: 26px 0 0 24px; }
.comment { position: relative; height: 220px; border: 1px solid #b6dcff; border-radius: 9px; background: #fff; }
.pointer { position: absolute; left: -13px; top: 18px; }
.comment-head { height: 60px; display: flex; align-items: center; padding: 0 33px 0 26px; border-bottom: 1px solid #b6dcff; border-radius: 9px 9px 0 0; background: #ddf4ff; color: #656d76; }
.comment-head > b, .comment-head > span { padding-bottom: 2px; }
.comment-head b, .event b { color: #1f2328; margin-right: 6.5px; letter-spacing: -0.45px; }
.comment-head svg { margin-left: 20px; }
.owner { margin: 2px 0 0 auto; width: 84px; height: 32px; border: 1px solid #a5d6ff; border-radius: 16px; font-size: 18.2px; font-weight: 600; line-height: 29px; text-align: center; }
.comment-body { padding: 28px 26px; }
.comment-body p { line-height: 32px; }
.react { width: 43px; height: 43px; margin-top: 28px; border: 1px solid #dde1e6; border-radius: 50%; background: #f6f8fa; color: #656d76; display: grid; place-items: center; }
.event { display: flex; height: 105px; margin-left: 5px; color: #656d76; white-space: nowrap; }
.rail { width: 47px; display: flex; flex-direction: column; align-items: center; }
.rail i { width: 3px; height: 26px; background: #d8dee4; }
.event-icon { width: 47px; height: 47px; margin: 3px 0; border-radius: 50%; background: #eaeef2; display: grid; place-items: center; }
.event p { margin-left: 16px; padding-top: 34px; line-height: 32px; letter-spacing: -0.04px; }
.commit { display: flex; height: 59.33px; padding-left: 14.5px; color: #656d76; white-space: nowrap; }
.commit code { line-height: 26px; }
.commit a { color: #0969da; }
.dot { width: 27px; display: flex; flex-direction: column; align-items: center; }
.dot svg { margin-left: -1px; }
.dot i { width: 3px; height: 32px; margin-top: 1px; background: #d8dee4; }
.face { margin: -6px 10.500px 0 27px; }
.more { display: flex; width: 33px; height: 21px; margin: 2px 0 0 18px; background: #eff1f3; align-items: center; justify-content: center; gap: 3px; }
.more i { width: 3px; height: 3px; border-radius: 50%; background: #1f2328; }
.sha { margin-left: auto; }
.verified { width: 94px; height: 33px; margin: -3px 0 0 auto; border: 1px solid #d0d7de; border-radius: 17px; color: #1a7f37; font-size: 18px; font-weight: 600; line-height: 30px; text-align: center; }
.verified + .sha { margin-left: 46px; }

.sidebar { width: 488px; margin: 25.500px 0 0 40px; color: #656d76; font-size: 19px; }
.sidebar section { height: 126.4px; padding-top: 29px; border-bottom: 1px solid #d8dee4; }
.sidebar h2 { display: flex; justify-content: space-between; align-items: flex-start; height: 26px; line-height: 25px; font-size: 18.500px; font-weight: 600; }
.sidebar h2 svg { margin-top: 1.500px; }
.sidebar .menu svg { margin-top: -1.500px; }
.sidebar p { margin-top: 16px; line-height: 26px; color: #1f2328; }
.sidebar a { color: #656d76; }
.scrollbar { width: 23px; background: #fcfcfc; display: flex; flex-direction: column; align-items: center; padding: 6px 0; color: #8b8b8b; }
.thumb { width: 13px; height: 338px; margin: 110px 0 auto; border-radius: 7px; background: #8b8b8b; }

/* Taskbar */
.taskbar { height: 72px; flex: none; display: flex; align-items: center; border-top: 2px solid #a9b8ba; color: #1a1a1a; background: linear-gradient(90deg, #c2ecd2 0, #c3ead5 260px, #c9e7e4 420px, #cfe1e8 620px, #c5e8e4 700px, #d0dfe8 800px, #c4e9e4 930px, #d0dfe8 1060px, #cfe1e8 1240px, #c9e5e5 1320px, #d2dfe8 1480px, #d5dae7 1700px, #d6dce6 1920px); }
.start { margin: 0 0 1px 259px; }
.search { width: 328px; height: 46px; margin-left: 21px; border-radius: 23px; background: #eef8f7; border: 1px solid #b7d3d0; border-bottom: 2px solid #a4bfbf; display: flex; align-items: center; padding: 0 5px 0 15px; }
.search span { margin: -2px auto 0 15px; font-size: 19.5px; letter-spacing: -0.2px; color: #5b6262; }
.apps { display: flex; margin: 0 0 1px 4px; }
.app { position: relative; width: 66.1px; height: 70px; display: grid; place-items: center; }
.run::after, .current::after { content: ""; position: absolute; bottom: 6px; left: 28px; width: 10px; height: 5px; border-radius: 3px; background: #7a8487; }
.current::before { content: ""; position: absolute; left: 5px; top: 6px; width: 56px; height: 57px; border-radius: 6px; background: #e7eff3; box-shadow: 0 1px 1px #aebec4; }
.current svg { position: relative; }
.current::after { left: 21px; width: 25px; background: #0078d4; }
.word { font: 700 16px "Open Sans", sans-serif; fill: #fff; }
.badge { position: absolute; left: 32px; top: 9px; width: 30px; height: 25px; border-radius: 13px; background: #0078d4; color: #fff; font-size: 16px; line-height: 24px; text-align: center; }
.tray { margin-left: auto; padding: 0 29px 2px 0; display: flex; align-items: center; }
.lang { margin: 0 26px 0 30px; font-size: 17.5px; letter-spacing: -0.2px; }
.tray svg + svg { margin-left: 11px; }
.clock { width: 107px; margin-right: 12px; display: flex; flex-direction: column; text-align: right; font-size: 17.5px; line-height: 24px; letter-spacing: -0.3px; }
```
